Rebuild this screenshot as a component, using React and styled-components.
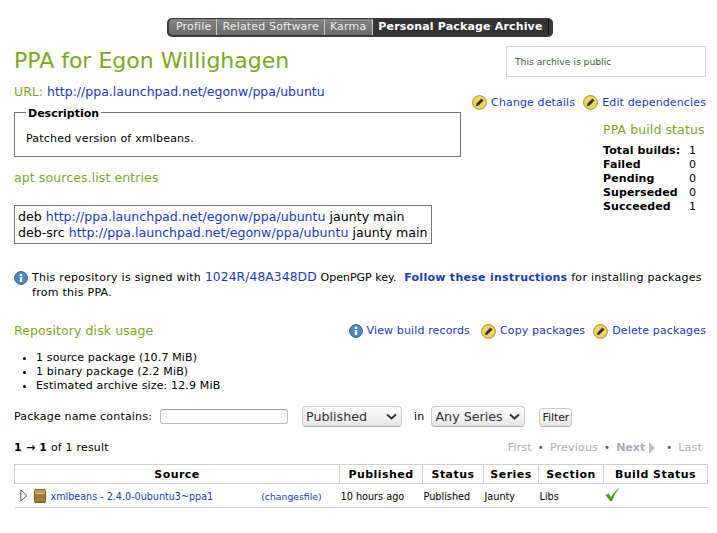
import React from "react";
import styled, { createGlobalStyle } from "styled-components";

const GlobalStyle = createGlobalStyle`
  html, body { margin: 0; padding: 0; background: #fff; }
  body { font-family: "DejaVu Sans", sans-serif; font-size: 11px; color: #000; }
  a { color: #1a3bb8; text-decoration: none; }
`;

const Page = styled.div`
  width: 717px;
  height: 533px;
  overflow: hidden;
  padding: 18px 11px 0 14px;
  box-sizing: border-box;
`;

const TabBarWrap = styled.div`
  display: flex;
  margin-left: 153px;
`;

const TabBar = styled.div`
  display: flex;
  height: 19px;
  background: #3a3a3a;
  border-radius: 5px;
  padding: 1px 4px 2px 2px;
  box-sizing: border-box;
`;

const Tab = styled.div`
  padding: 0 ${(p) => p.$right}px 0 ${(p) => p.$left}px;
  font-size: 11px;
  line-height: 16px;
  letter-spacing: 0.17px;
  font-weight: ${(p) => (p.$active ? 700 : 400)};
  color: ${(p) => (p.$active ? "#fff" : "#ececec")};
  background: ${(p) => (p.$active ? "#333" : "linear-gradient(#858585, #6a6a6a)")};
  border-right: 1px solid ${(p) => (p.$active ? "#111" : "#c8c8c8")};
  &:first-child { border-radius: 4px 0 0 4px; }
`;

const TopRow = styled.div`
  display: flex;
  justify-content: space-between;
  align-items: flex-start;
`;

const Title = styled.h1`
  margin: 6px 0 0;
  font-size: 22px;
  line-height: 35px;
  font-weight: 400;
  color: #7ea81c;
`;

const PublicBox = styled.div`
  width: 200px;
  height: 31px;
  box-sizing: border-box;
  border: 1px solid #d4d4d4;
  margin: 9px 0 0;
  padding: 0 8px;
  font-size: 9.2px;
  line-height: 30px;
  color: #3d5c3d;
`;

const Columns = styled.div`
  display: flex;
  justify-content: space-between;
`;

const Main = styled.div`
  width: 447px;
`;

const UrlLine = styled.div`
  margin-top: 5px;
  font-size: 12.5px;
  line-height: 18px;
  color: #7ea81c;
`;

const Fieldset = styled.fieldset`
  margin: 3px 0 0;
  padding: 11px 11px 0;
  height: 53px;
  box-sizing: border-box;
  border: 1px solid #777;
  min-width: 0;
  letter-spacing: 0.2px;
`;

const Legend = styled.legend`
  padding: 3px 2px 0;
  margin-left: 0;
  font-weight: 700;
  font-size: 11px;
  line-height: 14px;
  letter-spacing: 0;
`;

const SubHead = styled.h2`
  margin: 0;
  font-size: 12.5px;
  line-height: 18px;
  font-weight: 400;
  letter-spacing: 0.1px;
  color: #7ea81c;
`;

const AptHead = styled(SubHead)`
  margin-top: 12px;
`;

const SourcesBox = styled.div`
  margin-top: 18px;
  width: 418px;
  box-sizing: border-box;
  border: 1px solid #777;
  padding: 3px 3px 2px;
  font-size: 12.6px;
  line-height: 16px;
`;

const Side = styled.div`
  width: 240px;
  display: flex;
  flex-direction: column;
  align-items: flex-end;
`;

const Actions = styled.div`
  display: flex;
  justify-content: flex-end;
  align-items: center;
  gap: 9px;
`;

const SideActions = styled(Actions)`
  margin-top: 17px;
`;

const ActionLink = styled.a`
  display: inline-flex;
  align-items: center;
  gap: 4px;
  margin-right: ${(p) => p.$after || 0}px;
  font-size: 11px;
  letter-spacing: 0.13px;
  line-height: 14px;
`;

const BuildStatus = styled.div`
  width: 102px;
  margin-top: 11px;
  margin-right: 1px;
`;

const BuildRows = styled.div`
  display: grid;
  grid-template-columns: 86px auto;
  margin-top: 5px;
  line-height: 14px;
  font-size: 11px;
  letter-spacing: 0.1px;
  b { font-weight: 700; }
`;

const SignedNote = styled.div`
  display: flex;
  gap: 4px;
  margin-top: 26px;
  line-height: 15px;
  letter-spacing: 0.28px;
  svg { margin-top: 1px; flex: none; }
`;

const KeyLink = styled.a`
  font-size: 12.3px;
  letter-spacing: 0.1px;
`;

const KeyText = styled.span`
  letter-spacing: 0;
  margin-right: 4px;
`;

const UsageRow = styled.div`
  display: flex;
  justify-content: space-between;
  align-items: center;
  margin-top: 22px;
`;

const UsageList = styled.ul`
  margin: 11px 0 0;
  padding: 0 0 0 22px;
  line-height: 14px;
  letter-spacing: 0.15px;
`;

const FilterRow = styled.div`
  display: flex;
  align-items: center;
  margin-top: 11px;
  height: 24px;
  letter-spacing: 0.18px;
`;

const TextInput = styled.div`
  width: 126px;
  height: 13px;
  margin-left: 8px;
  border: 1px solid #bbb;
  border-top-color: #999;
  border-radius: 3px;
`;

const FakeSelect = styled.div`
  display: flex;
  align-items: center;
  justify-content: space-between;
  width: ${(p) => p.$width}px;
  height: 21px;
  margin-left: ${(p) => p.$left}px;
  padding: 0 4px 0 3px;
  box-sizing: border-box;
  border: 1px solid #ccc;
  border-bottom-color: #aaa;
  border-radius: 4px;
  background: linear-gradient(#fdfdfd, #e6e6e6);
  font-size: 12.7px;
  letter-spacing: 0;
  color: #333;
`;

const InLabel = styled.span`
  margin-left: 12px;
`;

const FilterButton = styled.div`
  margin: 2px 0 0 14px;
  width: 33px;
  height: 19px;
  box-sizing: border-box;
  text-align: center;
  border: 1px solid #ccc;
  border-bottom-color: #aaa;
  border-radius: 4px;
  background: linear-gradient(#fdfdfd, #e6e6e6);
  line-height: 18px;
  letter-spacing: -0.1px;
  color: #222;
`;

const Pager = styled.div`
  display: flex;
  justify-content: space-between;
  margin-top: 12px;
  line-height: 16px;
  letter-spacing: 0.2px;
`;

const PagerLinks = styled.div`
  display: flex;
  align-items: center;
  color: #a9adb8;
  padding-right: 4px;
  i { font-style: normal; color: #555; margin: 0 6px; font-size: 10px; }
  i:last-of-type { margin-left: 10px; }
  b { font-weight: 700; margin-right: 3px; letter-spacing: 0; }
`;

const Table = styled.table`
  width: 693px;
  margin-top: 8px;
  border-collapse: collapse;
  table-layout: fixed;
  font-size: 9.7px;
  th {
    height: 18px;
    padding: 0;
    border: 1px solid #d0d0d0;
    font-size: 11px;
    letter-spacing: 0.45px;
    font-weight: 700;
    text-align: center;
  }
  td {
    height: 24px;
    padding: 1px 1px 0;
    box-sizing: border-box;
    border-bottom: 1px solid #d0d0d0;
  }
`;

const SourceCell = styled.div`
  display: flex;
  align-items: center;
`;

const ChangesLink = styled.a`
  margin-left: 48px;
  font-size: 9.3px;
`;

const PackageName = styled.a`
  margin-left: 5px;
  font-size: 9.6px;
`;

const ExpandIcon = styled.svg`
  margin: -1px 6px 0 4px;
`;

const PackageIcon = styled.svg`
  margin-top: -1px;
`;

const CheckIcon = styled.svg`
  display: block;
  margin-top: -4px;
`;

const PencilBadge = styled.svg`
  margin-left: -1px;
`;

const EditIcon = () => (
  <PencilBadge width="15" height="15" viewBox="0 0 15 15">
    <circle cx="7.5" cy="7.5" r="6.9" fill="#ecd75a" stroke="#b08a30" />
    <path d="M3.9 11.3 L4.6 8.6 L9.4 3.5 L11.5 5.4 L6.6 10.6 Z" fill="#333" />
  </PencilBadge>
);

const InfoIcon = () => (
  <svg width="14" height="14" viewBox="0 0 14 14">
    <circle cx="7" cy="7" r="6.4" fill="#4f86c6" stroke="#2f5f9e" />
    <rect x="5.8" y="6" width="2.4" height="5" fill="#fff" />
    <rect x="5.8" y="2.8" width="2.4" height="2.2" fill="#fff" />
  </svg>
);

const Chevron = () => (
  <svg width="11" height="7" viewBox="0 0 11 7">
    <path d="M1 1.5 L5.5 5.5 L10 1.5" fill="none" stroke="#333" strokeWidth="2" />
  </svg>
);

const buildCounts = [
  ["Total builds:", 1],
  ["Failed", 0],
  ["Pending", 0],
  ["Superseded", 0],
  ["Succeeded", 1],
];

export default function App() {
  return (
    <>
      <GlobalStyle />
      <Page>
        <TabBarWrap>
          <TabBar>
            <Tab $left={7} $right={5}>Profile</Tab>
            <Tab $left={5} $right={5}>Related Software</Tab>
            <Tab $left={5} $right={6}>Karma</Tab>
            <Tab $active $left={5} $right={5}>Personal Package Archive</Tab>
          </TabBar>
        </TabBarWrap>
        <TopRow>
          <Title>PPA for Egon Willighagen</Title>
          <PublicBox>This archive is public</PublicBox>
        </TopRow>
        <Columns>
          <Main>
            <UrlLine>
              URL: <a href="#">http://ppa.launchpad.net/egonw/ppa/ubuntu</a>
            </UrlLine>
            <Fieldset>
              <Legend>Description</Legend>
              Patched version of xmlbeans.
            </Fieldset>
            <AptHead>apt sources.list entries</AptHead>
            <SourcesBox>
              deb <a href="#">http://ppa.launchpad.net/egonw/ppa/ubuntu</a> jaunty main
              <br />
              deb-src <a href="#">http://ppa.launchpad.net/egonw/ppa/ubuntu</a> jaunty main
            </SourcesBox>
          </Main>
          <Side>
            <SideActions>
              <ActionLink href="#"><EditIcon />Change details</ActionLink>
              <ActionLink href="#"><EditIcon />Edit dependencies</ActionLink>
            </SideActions>
            <BuildStatus>
              <SubHead>PPA build status</SubHead>
              <BuildRows>
                {buildCounts.map(([label, count]) => (
                  <React.Fragment key={label}>
                    <b>{label}</b>
                    <span>{count}</span>
                  </React.Fragment>
                ))}
              </BuildRows>
            </BuildStatus>
          </Side>
        </Columns>
        <SignedNote>
          <InfoIcon />
          <div>
            This repository is signed with <KeyLink href="#">1024R/48A348DD</KeyLink>{" "}
            <KeyText>OpenPGP key.</KeyText>{" "}
            <a href="#"><b>Follow these instructions</b></a> for installing packages
            <br />
            from this PPA.
          </div>
        </SignedNote>
        <UsageRow>
          <SubHead>Repository disk usage</SubHead>
          <Actions>
            <ActionLink href="#" $after={3}><InfoIcon />View build records</ActionLink>
            <ActionLink href="#"><EditIcon />Copy packages</ActionLink>
            <ActionLink href="#"><EditIcon />Delete packages</ActionLink>
          </Actions>
        </UsageRow>
        <UsageList>
          <li>1 source package (10.7 MiB)</li>
          <li>1 binary package (2.2 MiB)</li>
          <li>Estimated archive size: 12.9 MiB</li>
        </UsageList>
        <FilterRow>
          Package name contains:
          <TextInput />
          <FakeSelect $width={100} $left={14}>Published <Chevron /></FakeSelect>
          <InLabel>in</InLabel>
          <FakeSelect $width={94} $left={7}>Any Series <Chevron /></FakeSelect>
          <FilterButton>Filter</FilterButton>
        </FilterRow>
        <Pager>
          <div><b>1 → 1</b> of 1 result</div>
          <PagerLinks>
            First<i>•</i>Previous<i>•</i><b>Next</b>
            <svg width="8" height="12" viewBox="0 0 8 12"><path d="M1 0 L7 6 L1 12 Z" fill="#b8bcc4" /></svg>
            <i>•</i>Last
          </PagerLinks>
        </Pager>
        <Table>
          <colgroup>
            <col width="325" />
            <col width="83" />
            <col width="61" />
            <col width="55" />
            <col width="65" />
            <col width="104" />
          </colgroup>
          <thead>
            <tr>
              <th>Source</th>
              <th>Published</th>
              <th>Status</th>
              <th>Series</th>
              <th>Section</th>
              <th>Build Status</th>
            </tr>
          </thead>
          <tbody>
            <tr>
              <td>
                <SourceCell>
                  <ExpandIcon width="8" height="13" viewBox="0 0 8 13">
                    <path d="M0.8 1 L7 6.5 L0.8 12 Z" fill="#f4f4f4" stroke="#666" />
                  </ExpandIcon>
                  <PackageIcon width="12" height="14" viewBox="0 0 12 14">
                    <rect x="0.5" y="0.5" width="11" height="13" rx="1.5" fill="#a87a32" stroke="#7c5a22" />
                    <rect x="1" y="1" width="10" height="3" fill="#c49a58" />
                    <rect x="1" y="4" width="10" height="1" fill="#d9b77c" />
                  </PackageIcon>
                  <PackageName href="#">xmlbeans - 2.4.0-0ubuntu3~ppa1</PackageName>
                  <ChangesLink href="#">(changesfile)</ChangesLink>
                </SourceCell>
              </td>
              <td>10 hours ago</td>
              <td>Published</td>
              <td>Jaunty</td>
              <td>Libs</td>
              <td>
                <CheckIcon width="16" height="15" viewBox="0 0 16 15">
                  <path d="M0.5 8 L3.5 6.5 L6 10 Q10 4 15 0 Q10 6 7 14 L5 14 Z" fill="#4f9e12" />
                </CheckIcon>
              </td>
            </tr>
          </tbody>
        </Table>
      </Page>
    </>
  );
}
